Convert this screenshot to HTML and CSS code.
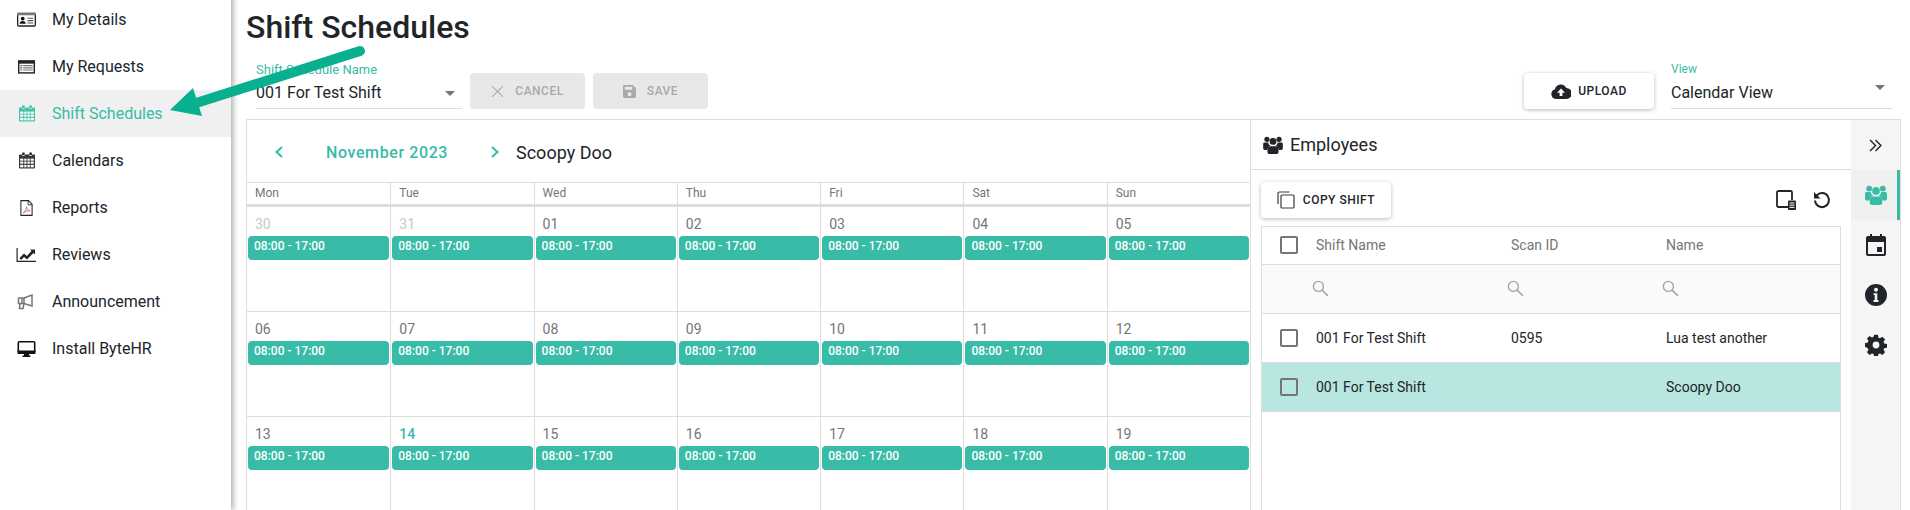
FILE: index.html
```html
<!DOCTYPE html>
<html lang="en">

<head>
    <meta charset="UTF-8">
    <title>Shift Schedules</title>
    <link rel="stylesheet" href="styles.css">
</head>

<body>
    <svg class="sprite" width="0" height="0">
        <symbol id="i-users" viewBox="0 0 24 22">
            <circle cx="4.6" cy="4" r="3.2" />
            <circle cx="19.4" cy="4" r="3.2" />
            <circle cx="12" cy="6.6" r="4.2" />
            <path d="M0 9.5C0 8.4.9 7.8 2 7.8h4.2c.3 1.700 1.300 3.200 2.600 4.100-2.400 1-3.800 2.900-4 5.100H2c-1.100 0-2-.8-2-2zM24 9.500c0-1.100-.9-1.700-2-1.700h-4.200c-.3 1.700-1.300 3.200-2.600 4.100 2.400 1 3.800 2.900 4 5.100H22c1.100 0 2-.8 2-2z" />
            <path d="M8.500 12.600h7c2 0 3.300 1.500 3.300 3.500v3.400c0 1.400-1.100 2.500-2.500 2.500H7.700c-1.400 0-2.500-1.100-2.500-2.500v-3.400c0-2 1.300-3.500 3.300-3.500z" />
        </symbol>
        <symbol id="i-grid-cal" viewBox="0 0 20 20">
            <path d="M4 0h3v3H4zM13 0h3v3h-3z" />
            <path d="M1 2.500h3V4h3V2.500h6V4h3V2.500h3c.6 0 1 .4 1 1V19c0 .6-.4 1-1 1H1c-.6 0-1-.4-1-1V3.500c0-.6.4-1 1-1z" fill-opacity=".9" />
            <path d="M1.500 7h17v11.500h-17z" fill="#fff" />
            <path d="M1 6.500h18v1H1zM1 10.300h18v1H1zM1 14.200h18v1H1zM5.500 7h1v12h-1zM9.500 7h1v12h-1zM13.500 7h1v12h-1z" />
        </symbol>
        <symbol id="i-search" viewBox="0 0 16 16" fill="none" stroke="#a6a6a6">
            <circle cx="6" cy="6" r="4.700" stroke-width="1.300" />
            <path d="M9.500 9.500 15 15" stroke-width="1.500" />
        </symbol>
    </svg>

    <aside class="sidebar">
        <a class="nav-item">
            <svg class="nav-icon" viewBox="0 0 20 16">
                <rect x=".7" y="1.700" width="18.600" height="12.600" rx="1" fill="#fff" stroke="#212529" stroke-width="1.400" />
                <path d="M0 1a1 1 0 0 1 1-1h18a1 1 0 0 1 1 1v2H0z" fill="#777" />
                <circle cx="6" cy="6.500" r="2" fill="#111" />
                <path d="M2.800 12c0-2 1.400-3 3.200-3s3.200 1 3.200 3z" fill="#111" />
                <path d="M11 5.500h6v1.300h-6zM11 8h6v1.300h-6zM11 10.500h6v1.300h-6z" fill="#555" />
            </svg>
            <span>My Details</span>
        </a>
        <a class="nav-item">
            <svg class="nav-icon" viewBox="0 0 20 16">
                <rect x="1.800" y="1.800" width="16.400" height="12.400" fill="#fff" stroke="#212529" stroke-width="1.500" />
                <path d="M1 1h18v3.500H1z" fill="#212529" />
                <path d="M3.500 6h2v1.200h-2zM3.500 8.300h2v1.200h-2zM3.500 10.600h2v1.200h-2z" fill="#555" />
                <path d="M6.500 6h10v1.200h-10zM6.500 8.300h10v1.200h-10zM6.500 10.600h10v1.200h-10z" fill="#777" />
            </svg>
            <span>My Requests</span>
        </a>
        <a class="nav-item active">
            <svg class="nav-icon nav-icon-cal"><use href="#i-grid-cal" /></svg>
            <span>Shift Schedules</span>
        </a>
        <a class="nav-item">
            <svg class="nav-icon nav-icon-cal"><use href="#i-grid-cal" /></svg>
            <span>Calendars</span>
        </a>
        <a class="nav-item">
            <svg class="nav-icon nav-icon-file" viewBox="0 0 16 20" fill="none">
                <path d="M1 .8h9.500L15 5.300V19.200H1z" stroke="#212529" stroke-width="1.300" />
                <path d="M10 1v5h5" stroke="#212529" stroke-width="1.100" />
                <path d="M4 16c2.500-1.500 3.500-4 4-7.500.5 3 2 4.500 4.500 5-3-.2-6 .5-8.500 2.500z" stroke="#c2606e" stroke-width="1" />
            </svg>
            <span>Reports</span>
        </a>
        <a class="nav-item">
            <svg class="nav-icon nav-icon-wide" viewBox="0 0 20 14">
                <path d="M.5 0h1.200v12.800H20V14H.5z" fill="#212529" />
                <path d="M3.500 10 8 5.500l2.800 2.500L15.500 3 14 1.500h5v5L17.500 5l-6.600 6.500L8 9l-3 3z" fill="#212529" />
            </svg>
            <span>Reviews</span>
        </a>
        <a class="nav-item">
            <svg class="nav-icon nav-icon-horn" viewBox="0 0 16 16" fill="none" stroke="#777" stroke-width="1.500">
                <path d="M15 1v11L7 9.500H1.500V4H7z" />
                <path d="M7 4v5.500M3 9.500l-.5 5h3.500l1-5M5 4v5.500" />
            </svg>
            <span>Announcement</span>
        </a>
        <a class="nav-item">
            <svg class="nav-icon" viewBox="0 0 18 16">
                <rect x=".8" y=".8" width="16.400" height="10.400" rx="1" fill="#fff" stroke="#111" stroke-width="1.600" />
                <path d="M0 9.500h18V12a1 1 0 0 1-1 1H1a1 1 0 0 1-1-1zM6.500 13h5v1.500h1.500V16H5v-1.500h1.500z" fill="#111" />
            </svg>
            <span>Install ByteHR</span>
        </a>
    </aside>

    <main class="content">
        <h1 class="page-title">Shift Schedules</h1>

        <div class="toolbar">
            <label class="field field-schedule">
                <span class="field-label">Shift Schedule Name</span>
                <span class="field-value">001 For Test Shift</span>
                <i class="caret"></i>
            </label>
            <button class="btn btn-disabled">
                <svg class="btn-icon" viewBox="0 0 12 12" fill="none" stroke="#a9a9a9" stroke-width="1"><path d="M1 1l10 10M11 1 1 11" /></svg>
                CANCEL
            </button>
            <button class="btn btn-disabled">
                <svg class="btn-icon" viewBox="0 0 14 14" fill="#a9a9a9"><path d="M1.500 0H10.500L14 3.500V12.500A1.500 1.500 0 0 1 12.500 14H1.500A1.500 1.500 0 0 1 0 12.500V1.500A1.500 1.500 0 0 1 1.500 0zM2 1.800V5h8V1.800zM7 7.700a2.200 2.200 0 1 0 0 4.400 2.200 2.200 0 0 0 0-4.400z" fill-rule="evenodd" /></svg>
                SAVE
            </button>
            <button class="btn btn-raised btn-upload">
                <svg class="btn-icon btn-icon-cloud" viewBox="0 0 20 15" fill="#212529"><path fill-rule="evenodd" d="M5 15a5 5 0 0 1-1-9.800A6 6 0 0 1 15.300 4 5.500 5.500 0 0 1 15.500 15zM10 4.500 6 8.800h2.600V12h2.800V8.800H14z" /></svg>
                UPLOAD
            </button>
            <label class="field field-view">
                <span class="field-label">View</span>
                <span class="field-value">Calendar View</span>
                <i class="caret caret-view"></i>
            </label>
        </div>

        <div class="card">
            <section class="calendar">
                <div class="month-bar">
                    <svg class="month-arrow month-prev" viewBox="0 0 8 12" fill="none"><path d="M7 1 1.500 6 7 11" /></svg>
                    <span class="month-name">November 2023</span>
                    <svg class="month-arrow month-next" viewBox="0 0 8 12" fill="none"><path d="M1 1l5.500 5L1 11" /></svg>
                    <span class="month-person">Scoopy Doo</span>
                </div>
                <div class="weekdays">
                    <div>Mon</div><div>Tue</div><div>Wed</div><div>Thu</div><div>Fri</div><div>Sat</div><div>Sun</div>
                </div>
                <div class="days">
                    <div class="day other"><span class="date">30</span><div class="shift">08:00 - 17:00</div></div>
                    <div class="day other"><span class="date">31</span><div class="shift">08:00 - 17:00</div></div>
                    <div class="day"><span class="date">01</span><div class="shift">08:00 - 17:00</div></div>
                    <div class="day"><span class="date">02</span><div class="shift">08:00 - 17:00</div></div>
                    <div class="day"><span class="date">03</span><div class="shift">08:00 - 17:00</div></div>
                    <div class="day"><span class="date">04</span><div class="shift">08:00 - 17:00</div></div>
                    <div class="day"><span class="date">05</span><div class="shift">08:00 - 17:00</div></div>
                    <div class="day"><span class="date">06</span><div class="shift">08:00 - 17:00</div></div>
                    <div class="day"><span class="date">07</span><div class="shift">08:00 - 17:00</div></div>
                    <div class="day"><span class="date">08</span><div class="shift">08:00 - 17:00</div></div>
                    <div class="day"><span class="date">09</span><div class="shift">08:00 - 17:00</div></div>
                    <div class="day"><span class="date">10</span><div class="shift">08:00 - 17:00</div></div>
                    <div class="day"><span class="date">11</span><div class="shift">08:00 - 17:00</div></div>
                    <div class="day"><span class="date">12</span><div class="shift">08:00 - 17:00</div></div>
                    <div class="day"><span class="date">13</span><div class="shift">08:00 - 17:00</div></div>
                    <div class="day today"><span class="date">14</span><div class="shift">08:00 - 17:00</div></div>
                    <div class="day"><span class="date">15</span><div class="shift">08:00 - 17:00</div></div>
                    <div class="day"><span class="date">16</span><div class="shift">08:00 - 17:00</div></div>
                    <div class="day"><span class="date">17</span><div class="shift">08:00 - 17:00</div></div>
                    <div class="day"><span class="date">18</span><div class="shift">08:00 - 17:00</div></div>
                    <div class="day"><span class="date">19</span><div class="shift">08:00 - 17:00</div></div>
                </div>
            </section>

            <section class="employees">
                <header class="panel-head">
                    <svg class="panel-head-icon"><use href="#i-users" /></svg>
                    <span>Employees</span>
                </header>
                <div class="panel-tools">
                    <button class="btn btn-raised btn-copy">
                        <svg class="btn-icon btn-icon-copy" viewBox="0 0 18 18" fill="none" stroke="#3a3a3a" stroke-width="1.200">
                            <path d="M12.500 1H2.500A1.500 1.500 0 0 0 1 2.500V13" />
                            <rect x="4" y="4" width="13" height="13" rx="1" />
                        </svg>
                        COPY SHIFT
                    </button>
                    <div class="tool-icons">
                        <svg class="tool-icon" viewBox="0 0 20 20" fill="none">
                            <path d="M14 17H2.500A1.500 1.500 0 0 1 1 15.500V2.500A1.500 1.500 0 0 1 2.500 1h12A1.500 1.500 0 0 1 16 2.500V10" stroke="#212529" stroke-width="1.800" />
                            <rect x="12" y="10.500" width="8" height="9.500" rx="1" fill="#212529" />
                            <path d="M13.500 13h5M13.500 15.200h5M13.500 17.400h5" stroke="#fff" stroke-width="1" />
                        </svg>
                        <svg class="tool-icon tool-undo" viewBox="0 0 18 18" fill="none">
                            <path d="M3.700 4.500A7 7 0 1 1 2 9.500" stroke="#212529" stroke-width="2" />
                            <path d="M1 1v6.500h6.500z" fill="#212529" />
                        </svg>
                    </div>
                </div>
                <div class="table-wrap">
                    <table class="emp-table">
                        <colgroup>
                            <col class="col-check">
                            <col class="col-shift">
                            <col class="col-scan">
                            <col>
                        </colgroup>
                        <thead>
                            <tr class="head-row">
                                <th><i class="check"></i></th>
                                <th>Shift Name</th>
                                <th>Scan ID</th>
                                <th>Name</th>
                            </tr>
                            <tr class="filter-row">
                                <td></td>
                                <td><svg class="search"><use href="#i-search" /></svg></td>
                                <td><svg class="search"><use href="#i-search" /></svg></td>
                                <td><svg class="search"><use href="#i-search" /></svg></td>
                            </tr>
                        </thead>
                        <tbody>
                            <tr>
                                <td><i class="check"></i></td>
                                <td>001 For Test Shift</td>
                                <td>0595</td>
                                <td>Lua test another</td>
                            </tr>
                            <tr class="selected">
                                <td><i class="check"></i></td>
                                <td>001 For Test Shift</td>
                                <td></td>
                                <td>Scoopy Doo</td>
                            </tr>
                        </tbody>
                    </table>
                </div>
            </section>

            <nav class="rail">
                <div class="rail-item">
                    <svg class="rail-icon rail-chevrons" viewBox="0 0 12 12" fill="none" stroke="#212529" stroke-width="1.300"><path d="M1 1l5 5-5 5M6 1l5 5-5 5" /></svg>
                </div>
                <div class="rail-item current">
                    <svg class="rail-icon"><use href="#i-users" /></svg>
                </div>
                <div class="rail-item">
                    <svg class="rail-icon" viewBox="0 0 20 22">
                        <path fill-rule="evenodd" d="M4 0h2v2h8V0h2v2h2a2 2 0 0 1 2 2v16a2 2 0 0 1-2 2H2a2 2 0 0 1-2-2V4a2 2 0 0 1 2-2h2zM2 8v12h16V8zM11 13h5v5h-5z" fill="#212529" />
                    </svg>
                </div>
                <div class="rail-item">
                    <svg class="rail-icon" viewBox="0 0 22 22">
                        <path fill-rule="evenodd" d="M11 0a11 11 0 1 1 0 22 11 11 0 0 1 0-22zM11 3.700a2 2 0 1 0 0 4 2 2 0 0 0 0-4zM8.500 9.300v1.800h1.200v5H8.500v1.800h5v-1.800h-1.200V9.300z" fill="#212529" />
                    </svg>
                </div>
                <div class="rail-item">
                    <svg class="rail-icon" viewBox="-1 0 26 24">
                        <path fill-rule="evenodd" d="M9.800 0h4.400l.7 3.300 1.800.8 2.900-1.800 3.100 3.100-1.800 2.900.8 1.800 3.300.7v4.400l-3.300.7-.8 1.800 1.800 2.900-3.100 3.100-2.900-1.800-1.800.8-.7 3.300H9.800l-.7-3.300-1.800-.8-2.900 1.800-3.100-3.100 1.800-2.900-.8-1.800L-1 14.200V9.800l3.300-.7.8-1.800-1.800-2.900 3.100-3.100 2.900 1.800 1.800-.8zM12 8a4 4 0 1 0 0 8 4 4 0 0 0 0-8z" fill="#212529" />
                    </svg>
                </div>
            </nav>
        </div>
    </main>

    <svg class="callout" viewBox="0 0 400 130">
        <path d="M360 51 193 104" stroke="#08b08f" stroke-width="10" stroke-linecap="round" fill="none" />
        <path d="M170 110 193 88 202 116z" fill="#08b08f" />
    </svg>
</body>

</html>
```

FILE: styles.css
```css
* {
    box-sizing: border-box;
}

html,
body {
    margin: 0;
    padding: 0;
    height: 510px;
    overflow: hidden;
}

body {
    display: flex;
    position: relative;
    background-color: #fff;
    font-family: Roboto, "Liberation Sans", sans-serif;
    color: #212529;
}

.sprite {
    position: absolute;
}

/* left menu */
.sidebar {
    flex: 0 0 231px;
    padding-top: 43px;
    margin-top: -47px;
    height: 557px;
    background-color: #fff;
    box-shadow: 2px 0 6px rgba(0, 0, 0, 0.35);
    z-index: 1;
}

.nav-item {
    display: flex;
    align-items: center;
    height: 47px;
    padding-left: 17px;
    font-size: 16px;
}

.nav-item.active {
    background-color: #f0f0f0;
    color: #38bba7;
}

.nav-icon {
    flex: none;
    width: 19px;
    height: 16px;
    margin-right: 16px;
}

.nav-icon-cal {
    width: 16px;
    height: 17px;
    margin-left: 2px;
    margin-right: 17px;
    fill: #212529;
}

.active .nav-icon-cal {
    fill: #38bba7;
}

.nav-icon-file {
    width: 15px;
    height: 16px;
    margin-left: 2px;
    margin-right: 18px;
}

.nav-icon-wide {
    width: 20px;
    height: 14px;
    margin-left: -1px;
}

.nav-icon-horn {
    width: 16px;
    height: 16px;
    margin-right: 19px;
}

/* page */
.content {
    flex: 1;
    min-width: 0;
    display: flex;
    flex-direction: column;
    padding: 8px 9px 0 15px;
}

.page-title {
    margin: 0;
    height: 38px;
    font-size: 32px;
    font-weight: 500;
    line-height: 38px;
}

.toolbar {
    display: flex;
    align-items: flex-end;
    height: 73px;
    padding-left: 10px;
    padding-right: 9px;
    padding-bottom: 10px;
    flex: none;
}

.field {
    display: block;
    position: relative;
    height: 46px;
    border-bottom: 1px solid #ddd;
}

.field-schedule {
    width: 206px;
    margin-right: 8px;
}

.field-view {
    width: 221px;
    margin-left: 17px;
}

.field-label {
    display: block;
    height: 18px;
    font-size: 13px;
    line-height: 13px;
    color: #38bba7;
}

.field-view .field-label {
    font-size: 12px;
}

.field-value {
    display: block;
    font-size: 16px;
    line-height: 24px;
}

.caret {
    position: absolute;
    right: 7px;
    top: 28px;
    border-left: 5px solid transparent;
    border-right: 5px solid transparent;
    border-top: 5px solid #757575;
}

.caret-view {
    right: 7px;
    top: 22px;
}

.btn {
    display: inline-flex;
    align-items: center;
    justify-content: center;
    height: 36px;
    padding: 0;
    border: none;
    border-radius: 4px;
    font-family: inherit;
    font-size: 12px;
    font-weight: 500;
    letter-spacing: 0.5px;
}

.btn-disabled {
    width: 115px;
    margin-right: 8px;
    background-color: #e8e8e8;
    color: #a9a9a9;
}

.btn-raised {
    background-color: #fff;
    color: #212529;
    box-shadow: 0 1px 4px rgba(0, 0, 0, 0.28);
}

.btn-upload {
    width: 130px;
    margin-left: auto;
}

.btn-copy {
    width: 130px;
}

.btn-icon {
    width: 13px;
    height: 13px;
    margin-right: 11px;
}

.btn-disabled:last-of-type .btn-icon {
    width: 14px;
    height: 14px;
    margin-right: 10px;
}

.btn-icon-cloud {
    width: 20px;
    height: 15px;
    margin-right: 7px;
}

.btn-icon-copy {
    width: 18px;
    height: 18px;
    margin-right: 8px;
}

/* main card */
.card {
    flex: 1;
    min-height: 0;
    display: flex;
    border: 1px solid #ddd;
    border-bottom: none;
}

.calendar {
    flex: 0 0 1004px;
    border-right: 1px solid #ddd;
}

.month-bar {
    display: flex;
    align-items: center;
    height: 62px;
    padding-left: 28px;
    padding-top: 2px;
}

.month-arrow {
    width: 8px;
    height: 12px;
    stroke: #38bba7;
    stroke-width: 2;
}

.month-name {
    width: 165px;
    padding-left: 43px;
    font-size: 16px;
    font-weight: 500;
    letter-spacing: 0.6px;
    color: #38bba7;
    box-sizing: content-box;
}

.month-person {
    margin-left: 17px;
    font-size: 18px;
}

.weekdays {
    display: grid;
    grid-template-columns: repeat(7, 1fr);
    height: 25px;
    border-top: 1px solid #ddd;
    border-bottom: 3px solid #ddd;
}

.weekdays div {
    padding-left: 8px;
    border-left: 1px solid #ddd;
    font-size: 12px;
    line-height: 21px;
    color: #757575;
}

.weekdays div:first-child {
    border-left: none;
}

.days {
    display: grid;
    grid-template-columns: repeat(7, 1fr);
    grid-auto-rows: 105px;
}

.day {
    padding: 9px 1px 0 1px;
    border-left: 1px solid #ddd;
    border-bottom: 1px solid #ddd;
}

.day:nth-child(7n+1) {
    border-left: none;
}

.date {
    display: block;
    height: 20px;
    padding-left: 7px;
    font-size: 14px;
    line-height: 16px;
    color: #757575;
}

.other .date {
    color: #c8c8c8;
}

.today .date {
    color: #38bba7;
    font-weight: 500;
}

.shift {
    height: 24px;
    padding-left: 6px;
    border-radius: 4px;
    background-color: #38bba7;
    color: #fff;
    font-size: 12px;
    font-weight: 500;
    line-height: 20px;
}

/* employees panel */
.employees {
    flex: 1;
    min-width: 0;
    display: flex;
    flex-direction: column;
}

.panel-head {
    display: flex;
    align-items: center;
    height: 50px;
    padding-left: 12px;
    border-bottom: 1px solid #ddd;
    font-size: 18px;
    flex: none;
}

.panel-head-icon {
    width: 20px;
    height: 18px;
    margin-right: 7px;
    fill: #212529;
}

.panel-tools {
    display: flex;
    align-items: center;
    justify-content: space-between;
    height: 56px;
    padding: 4px 20px 0 10px;
    flex: none;
}

.tool-icons {
    display: flex;
    align-items: center;
    gap: 17px;
}

.tool-icon {
    width: 20px;
    height: 20px;
}

.tool-undo {
    width: 18px;
    height: 18px;
}

.table-wrap {
    flex: 1;
    margin: 0 10px 0 10px;
    border: 1px solid #ddd;
    border-bottom: none;
}

.emp-table {
    width: 100%;
    table-layout: fixed;
    border-collapse: collapse;
    font-size: 14px;
}

.col-check {
    width: 54px;
}

.col-shift {
    width: 195px;
}

.col-scan {
    width: 155px;
}

.emp-table th,
.emp-table td {
    padding: 0;
    text-align: left;
    font-weight: 400;
}

.emp-table th:first-child,
.emp-table td:first-child {
    padding-left: 18px;
}

.emp-table tr {
    border-bottom: 1px solid #ddd;
}

.head-row {
    height: 37px;
    color: #757575;
}

.filter-row {
    height: 49px;
    background-color: #fafafa;
}

.search {
    display: block;
    width: 17px;
    height: 17px;
    margin-left: -4px;
}

.emp-table tbody tr {
    height: 49px;
}

.selected {
    background-color: #b8e6e0;
}

.check {
    display: block;
    width: 18px;
    height: 18px;
    border: 2px solid #757575;
    border-radius: 2px;
}

/* icon rail */
.rail {
    flex: none;
    width: 49px;
    background-color: #f5f5f5;
}

.rail-item {
    display: flex;
    align-items: center;
    justify-content: center;
    height: 50px;
    fill: #212529;
}

.rail-item.current {
    background-color: #f0f0f0;
    border-right: 3px solid #38bba7;
    padding-left: 3px;
    fill: #38bba7;
}

.rail-icon {
    width: 22px;
    height: 22px;
}

.rail-chevrons {
    width: 13px;
    height: 13px;
}

/* arrow drawn over the screenshot */
.callout {
    position: absolute;
    left: 0;
    top: 0;
    width: 400px;
    height: 130px;
    z-index: 2;
    pointer-events: none;
}
```
